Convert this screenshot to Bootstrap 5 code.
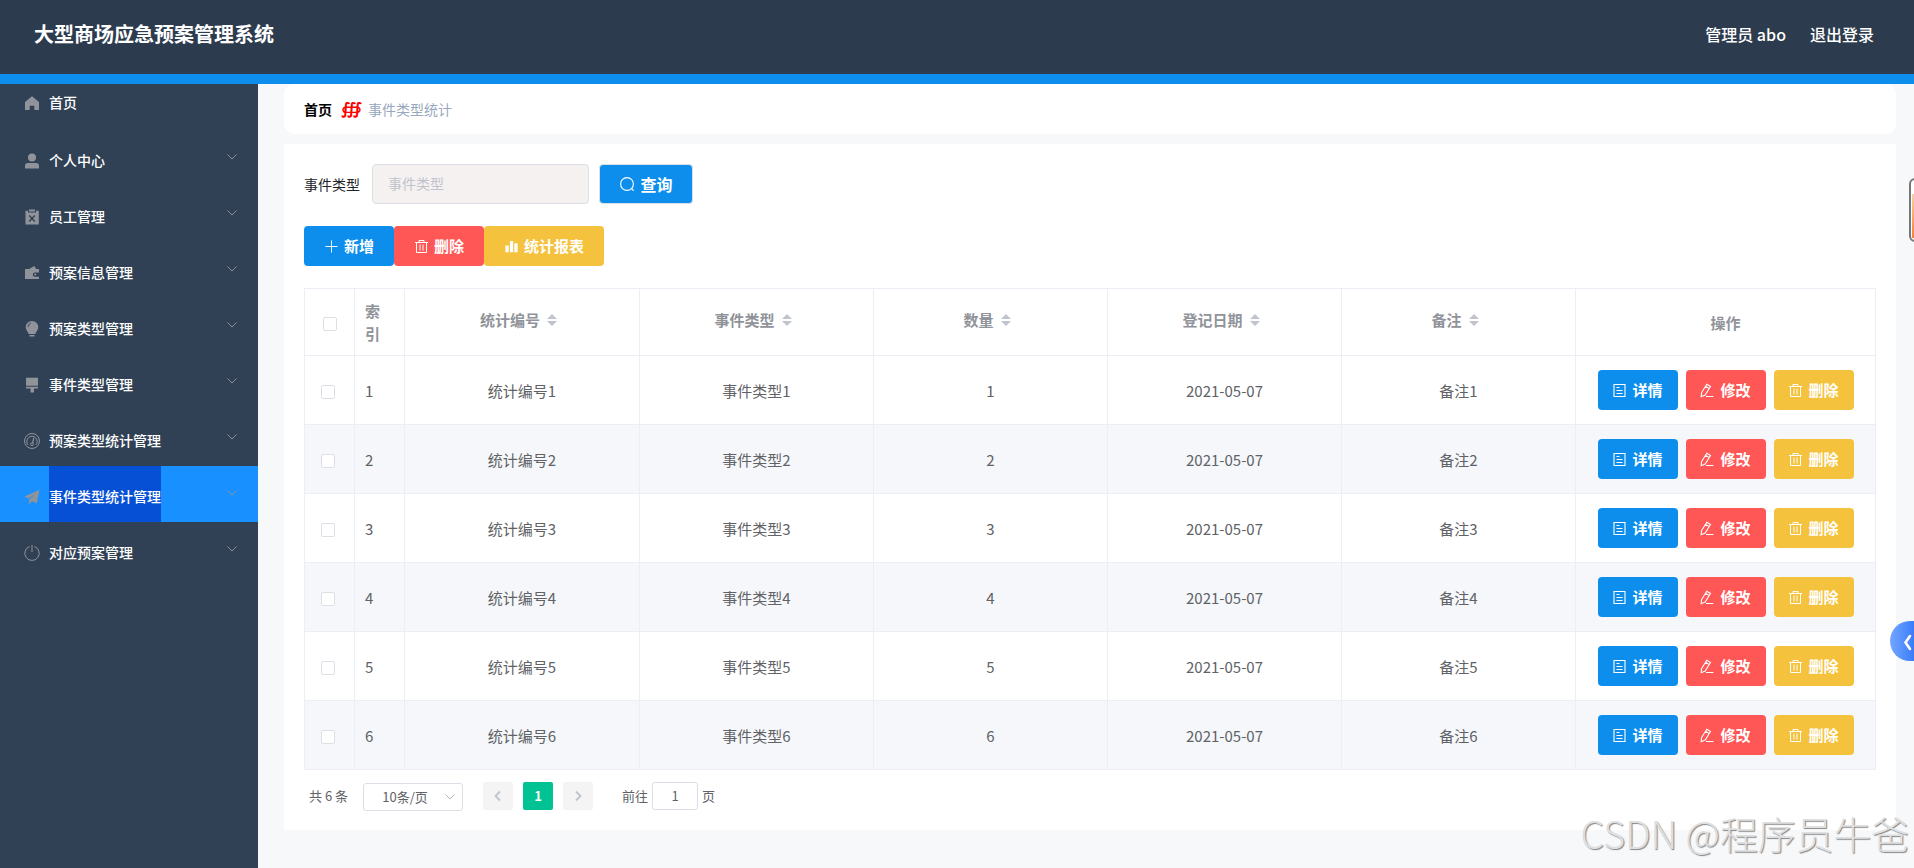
<!DOCTYPE html>
<html lang="zh-CN">
<head>
<meta charset="utf-8">
<title>大型商场应急预案管理系统</title>
<link href="https://cdn.jsdelivr.net/npm/bootstrap@5.3.0/dist/css/bootstrap.min.css" rel="stylesheet">
<style>
body{font-family:"Noto Sans CJK SC",sans-serif;font-size:14px;line-height:1.5;background:#f7f8fa;height:868px;overflow:hidden;color:#606266}
svg{display:block;flex:none}
.topbar{height:84px;background:#2d3b4e;border-bottom:10px solid #0d8eec;padding:0 40px 7px 34px;color:#fff}
.topbar h1{font-size:20px;font-weight:700;line-height:24px}
.topbar .user-links{font-size:16px;font-weight:500;gap:24px}
.sidebar{width:258px;height:784px;background:#304156;color:#fff;font-weight:500}
.side-item{height:56px;padding:6px 20px 0 24px;color:#fff;text-decoration:none}
.side-item.first{height:46px;padding-top:0;padding-bottom:8px}
.side-item svg{color:#909399}
.side-item .label-text{margin-left:9px;padding-bottom:2px}
.side-item .chev{margin:-8px 0 0 auto}
.side-item.active{background:#1890ff;padding-top:0;padding-bottom:0;align-items:stretch!important}
.side-item.active .label-text{background:#0650d5;line-height:60px;height:56px}
.side-item.active svg{align-self:center;margin-top:6px}
.side-item.active .chev{margin-top:-2px}
.content-area{padding:0 18px 0 26px}
.crumbs{height:50px;border-radius:10px;background:#fff;padding:0 20px 0;gap:9px;color:#97a8be}
.crumbs b{color:#000}
.crumbs i{color:#f00;font:700 16px/20px "DejaVu Sans",sans-serif;width:18px;text-align:center}
.panel{background:#fff;margin-top:10px;height:686px;padding:20px}
.search-input{width:217px;height:40px;background:#f5f1f1;border:1px solid #dcdfe6;border-radius:4px;padding:0 15px 2px;font-size:14px}
.search-input::placeholder{color:#c0c4cc}
.act{height:40px;border:0;border-radius:4px;color:#fff!important;font-size:15px;font-weight:700;padding:0;gap:5px;display:flex;align-items:center;justify-content:center}
.blue{background:#0d8eec!important}.red{background:#ff5656!important}.gold{background:#f4c23d!important}
.grid{width:1572px;table-layout:fixed;border-collapse:separate;border-spacing:0;border:solid #ebeef5;border-width:1px 0 0 1px;margin-top:22px;font-size:15px;line-height:23px}
.grid th,.grid td{border:solid #ebeef5;border-width:0 1px 1px 0;padding:0;text-align:center;vertical-align:middle}
.grid th{height:67px;color:#909399;font-weight:700}
.grid td{height:69px;padding-top:1px}
.grid tbody tr:nth-child(even){background:#f5f7fa}
.grid .idx{text-align:left;padding-left:10px;padding-right:24px}
.grid .ops{padding:0}
.ops .act{width:80px}
.tick{appearance:none;display:block;width:14px;height:14px;border:1px solid #dcdfe6;border-radius:2px;background:#fff;margin:2px auto 0 16px}
th .tick{margin:3px auto 0 18px}
.sorter{display:inline-flex;align-items:center;padding-bottom:5px}
.sorter svg{margin:1px 7px 0}
.pager{font-size:13px;padding:12px 5px 0;line-height:28px}
.pager .box{height:28px;border-radius:3px;line-height:28px;text-align:center}
.pager .box.outline{border:1px solid #dcdfe6;line-height:26px;background:#fff}
.pager .nav-btn{width:30px;background:#f4f4f5;border-radius:2px;color:#c0c4cc;display:flex;align-items:center;justify-content:center}
.tool-card{right:-40px;top:178px;width:45px;height:64px;border:2px solid #777;border-radius:6px;background:#fff}
.tool-card span{display:block;margin:14px 0 0 1px;height:44px;background:linear-gradient(#fbd0a4,#f08040)}
.drawer-tab{right:0;top:621px;width:24px;height:40px;border-radius:20px 0 0 20px;background:linear-gradient(90deg,#74a6ff,#3a7dfa)}
.sitemark{right:5px;top:805px;font-size:37.800px;line-height:56px;font-weight:300;color:#dedfe1;text-shadow:1px 1px 1px #858585;white-space:nowrap}
#query{width:94px;height:40px;margin-left:10px;font-size:16px;border:1px solid #dcdfe6;padding-bottom:1px}
#tools{margin-top:22px}
#size{width:100px;margin-top:1px;padding-right:6px}
#size span{margin-right:-14px;padding-right:12px}
#size+.nav-btn{margin-left:20px}
.nav-btn+.nav-btn{margin-left:10px}
.pager .current{background:#00c292;color:#fff;font-weight:700}
.goto{margin-left:29px;width:30px}
.page-no{width:46px;margin-right:4px}
.field-label{width:68px;padding-top:1px}
</style>
</head>
<body>
<svg width="0" height="0" class="position-absolute">
<symbol id="home" viewBox="0 0 16 16"><path fill="currentColor" d="M8 1.200 15 7v8h-4.700v-4.200H5.700V15H1V7z"/></symbol>
<symbol id="user" viewBox="0 0 16 16"><circle cx="8" cy="4.500" r="4" fill="currentColor"/><path fill="currentColor" d="M1 15.500v-2.600Q1 10 4 10h8q3 0 3 2.900v2.600z"/></symbol>
<symbol id="clip" viewBox="0 0 16 16"><path fill="currentColor" d="M5 .5h6v2H5zM1.500 1.700H4v1.800h8V1.700h2.800v13.800H1.500z"/><path d="m5.200 6.500 5.600 6m0-6-5.600 6" stroke="#304156" stroke-width="1.400"/></symbol>
<symbol id="wallet" viewBox="0 0 16 16"><path fill="currentColor" d="M5 4 10.300 1l1.800 3H15v3.400h-4a2.200 2.200 0 0 0 0 4.400h4V14H1V4z"/><circle cx="11.300" cy="9.600" r="1" fill="currentColor"/></symbol>
<symbol id="bulb" viewBox="0 0 16 16"><path fill="currentColor" d="M8 0a6.300 6.300 0 0 1 6.300 6.300c0 2.700-2 4-3.100 6.700H4.800C3.700 10.300 1.700 9 1.700 6.300A6.300 6.300 0 0 1 8 0zM5.500 14h5v1.500h-5z"/><path d="M4 6q.2-3 3-4" fill="none" stroke="#304156" stroke-width=".9"/></symbol>
<symbol id="brush" viewBox="0 0 16 16"><path fill="currentColor" d="M2 .8h12v8H2zM2 9.800h12v1.700h-4v4H6.500v-4H2z"/></symbol>
<symbol id="gauge" viewBox="0 0 16 16"><g fill="none" stroke="currentColor"><circle cx="8" cy="8" r="7.500"/><path d="M4 11.800A5.200 5.200 0 1 1 12 11.800"/><path d="M9.800 5 8.600 10" stroke-width="1.200"/><circle cx="8" cy="11.300" r="1.400"/></g></symbol>
<symbol id="plane" viewBox="0 0 16 16"><path fill="currentColor" d="M15.500.8.5 7.500l4 2.200L12 4 5.300 10.500l-.5 5.200 3.200-3.500 4.800 2z"/></symbol>
<symbol id="power" viewBox="0 0 16 16"><path d="M5.500 1.500a7.200 7.200 0 1 0 5 0M8 0v7" fill="none" stroke="currentColor"/></symbol>
<symbol id="down" viewBox="0 0 12 12"><path d="m1.500 3.500 4.500 4.500 4.500-4.500" fill="none" stroke="#909399"/></symbol>
<symbol id="find" viewBox="0 0 16 16"><path d="M14.700 14.700 12.300 12.300" stroke="currentColor" stroke-width="1.200"/><circle cx="8" cy="8" r="6.400" fill="none" stroke="currentColor" stroke-width="1.100"/></symbol>
<symbol id="plus" viewBox="0 0 16 16"><path d="M8 1.500v13M1.500 8h13" stroke="currentColor"/></symbol>
<symbol id="trash" viewBox="0 0 15 15"><path d="M1 3.500h13M5 3.500v-2h5v2M2.500 3.500v10h10v-10M6 5.500v6M9 5.500v6" fill="none" stroke="currentColor"/></symbol>
<symbol id="bars" viewBox="0 0 16 16"><path fill="currentColor" d="M1.500 7H5v7H1.500zM6.300 2h3.500v12H6.300zM11 4.500h3.500V14H11z"/></symbol>
<symbol id="doc" viewBox="0 0 15 15"><path d="M2 1.500h11v12H2zM4.500 4.500h3M4.500 7.500h6M4.500 10.500h6" fill="none" stroke="currentColor" stroke-width="1.100"/></symbol>
<symbol id="pen" viewBox="0 0 15 15"><path d="M1.500 9.700 6.800 1.200l3.700 2.300-5.300 8.500-4 1.700zM5.500 3.200l3.800 2.400M6 13.500h7.500" fill="none" stroke="currentColor" stroke-width="1.100"/></symbol>
</svg>

<header class="topbar d-flex align-items-center justify-content-between">
  <h1 class="m-0">大型商场应急预案管理系统</h1>
  <div class="user-links d-flex"><span>管理员 abo</span><span>退出登录</span></div>
</header>
<div class="d-flex">
  <nav class="sidebar flex-shrink-0" id="side"></nav>
  <main class="content-area flex-grow-1">
    <div class="crumbs d-flex align-items-center"><b>首页</b><i>∰</i><span>事件类型统计</span></div>
    <section class="panel">
      <form class="d-flex align-items-center">
        <label class="text-dark field-label">事件类型</label>
        <input class="search-input" placeholder="事件类型">
        <button type="button" class="btn act blue" id="query"><svg width="16" height="16"><use href="#find"/></svg>查询</button>
      </form>
      <div class="d-flex" id="tools"></div>
      <table class="grid">
        <colgroup><col width="50"><col width="50"><col width="235"><col width="234"><col width="234"><col width="234"><col width="234"><col width="300"></colgroup>
        <thead><tr id="head"></tr></thead>
        <tbody id="rows"></tbody>
      </table>
      <div class="pager d-flex">
        <span style="width:54px">共 6 条</span>
        <div class="box outline d-flex align-items-center" id="size"><span class="flex-grow-1">10条/页</span><svg width="12" height="12" opacity=".65"><use href="#down"/></svg></div>
        <div class="box nav-btn"><svg width="12" height="12"><path d="M8 1.500 3.500 6 8 10.500" fill="none" stroke="currentColor" stroke-width="1.800"/></svg></div>
        <div class="box nav-btn current">1</div>
        <div class="box nav-btn"><svg width="12" height="12"><path d="M4 1.500 8.500 6 4 10.500" fill="none" stroke="currentColor" stroke-width="1.800"/></svg></div>
        <span class="goto">前往</span><div class="box outline page-no">1</div><span>页</span>
      </div>
    </section>
  </main>
</div>
<div class="tool-card position-absolute"><span></span></div>
<div class="drawer-tab position-absolute"><svg width="24" height="40"><path d="m20 15-4.500 6.500 4.500 6.500" fill="none" stroke="#fff" stroke-width="2.600" stroke-linecap="round"/></svg></div>
<div class="sitemark position-absolute">CSDN @程序员牛爸</div>

<script src="https://cdn.jsdelivr.net/npm/bootstrap@5.3.0/dist/js/bootstrap.bundle.min.js"></script>
<script>
const icon=(n,s)=>`<svg width="${s}" height="${s}"><use href="#${n}"/></svg>`;
const menu=[['home','首页'],['user','个人中心'],['clip','员工管理'],['wallet','预案信息管理'],['bulb','预案类型管理'],['brush','事件类型管理'],['gauge','预案类型统计管理'],['plane','事件类型统计管理'],['power','对应预案管理']];
side.innerHTML=menu.map(([i,t],k)=>`<a class="side-item d-flex align-items-center ${k==0?'first':''} ${k==7?'active':''}">${icon(i,16)}<span class="label-text">${t}</span>${k?'<svg class="chev" width="12" height="12"><use href="#down"/></svg>':''}</a>`).join('');
tools.innerHTML=[['plus','新增','blue',90],['trash','删除','red',90],['bars','统计报表','gold',120]].map(([i,t,c,w])=>`<button class="btn act ${c}" style="width:${w}px">${icon(i,15)}${t}</button>`).join('');
const caret='<svg width="10" height="12"><path d="M5 0l5 5H0zM0 7h10l-5 5z" fill="#c0c4cc"/></svg>';
head.innerHTML='<th><input type="checkbox" class="tick"></th><th class="idx">索引</th>'+['统计编号','事件类型','数量','登记日期','备注'].map(t=>`<th><span class="sorter">${t}${caret}</span></th>`).join('')+'<th>操作</th>';
rows.innerHTML=[1,2,3,4,5,6].map(n=>`<tr><td><input type="checkbox" class="tick"></td><td class="idx">${n}</td><td>统计编号${n}</td><td>事件类型${n}</td><td>${n}</td><td>2021-05-07</td><td>备注${n}</td><td class="ops"><div class="d-flex justify-content-center gap-2"><button class="btn act blue">${icon('doc',15)}详情</button><button class="btn act red">${icon('pen',15)}修改</button><button class="btn act gold">${icon('trash',15)}删除</button></div></td></tr>`).join('');
</script>
</body>
</html>
